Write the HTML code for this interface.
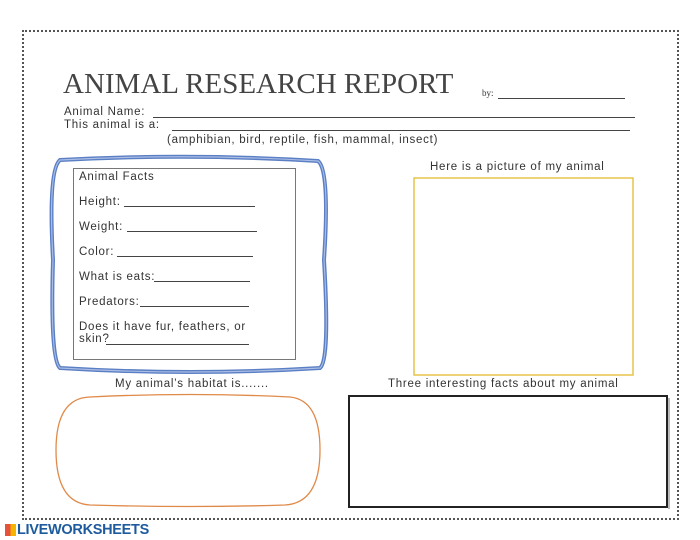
<!DOCTYPE html>
<html><head><style>
body{margin:0;width:700px;height:540px;background:#fff;position:relative;overflow:hidden;font-family:"Liberation Sans",sans-serif;color:#333}
.a{position:absolute;white-space:nowrap}
.t{font-size:11.5px;letter-spacing:0.75px}
.l{position:absolute;border-bottom:1px solid #444;height:0}
</style></head><body>
<div class="a" style="left:22px;top:30px;width:653px;height:486px;border:2px dotted #555"></div>
<div class="a" style="left:63px;top:68px;font-family:'Liberation Serif',serif;font-size:29px;letter-spacing:0px;color:#444;transform:scaleX(1.0);transform-origin:left">ANIMAL RESEARCH REPORT</div>
<div class="a" style="left:482px;top:88px;font-size:9px;font-family:'Liberation Serif',serif">by:</div>
<div class="l" style="left:498px;top:98px;width:127px"></div>
<div class="a t" style="left:64px;top:106px">Animal Name:</div>
<div class="l" style="left:153px;top:117px;width:482px"></div>
<div class="a t" style="left:64px;top:119px">This animal is a:</div>
<div class="l" style="left:172px;top:130px;width:458px"></div>
<div class="a t" style="left:167px;top:134px">(amphibian, bird, reptile, fish, mammal, insect)</div>
<svg class="a" style="left:0;top:0" width="700" height="540">
<path d="M60 160 Q190 153 318 161 Q330 170 324 260 Q330 360 320 368 Q190 376 60 368 Q50 360 53 260 Q48 170 60 160Z" fill="none" stroke="#5b7fc4" stroke-width="4"/>
<path d="M60 160 Q190 153 318 161 Q330 170 324 260 Q330 360 320 368 Q190 376 60 368 Q50 360 53 260 Q48 170 60 160Z" fill="none" stroke="#a9bde5" stroke-width="1.2"/>
<rect x="73.5" y="168.5" width="222" height="191" fill="#fff" stroke="#777"/>
<rect x="414" y="178" width="219" height="197" fill="none" stroke="#e8c34a" stroke-width="1.5"/>
<path d="M90 397 Q190 392 290 397 Q320 400 320 450 Q320 503 285 505 Q190 508 90 505 Q56 503 56 450 Q56 398 90 397Z" fill="none" stroke="#e08a4a" stroke-width="1.3"/>
<rect x="349" y="396" width="318" height="111" fill="none" stroke="#222" stroke-width="2"/>
<rect x="668" y="398" width="2" height="111" fill="#bbb"/>
</svg>
<div class="a t" style="left:79px;top:171px">Animal Facts</div>
<div class="a t" style="left:79px;top:196px">Height:</div><div class="l" style="left:124px;top:206px;width:131px"></div>
<div class="a t" style="left:79px;top:221px">Weight:</div><div class="l" style="left:127px;top:231px;width:130px"></div>
<div class="a t" style="left:79px;top:246px">Color:</div><div class="l" style="left:117px;top:256px;width:136px"></div>
<div class="a t" style="left:79px;top:271px">What is eats:</div><div class="l" style="left:154px;top:281px;width:96px"></div>
<div class="a t" style="left:79px;top:296px">Predators:</div><div class="l" style="left:140px;top:306px;width:109px"></div>
<div class="a t" style="left:79px;top:321px">Does it have fur, feathers, or</div>
<div class="a t" style="left:79px;top:333px">skin?</div><div class="l" style="left:106px;top:344px;width:143px"></div>
<div class="a t" style="left:430px;top:161px">Here is a picture of my animal</div>
<div class="a t" style="left:115px;top:378px">My animal’s habitat is.......</div>
<div class="a t" style="left:388px;top:378px">Three interesting facts about my animal</div>
<div class="a" style="left:5px;top:524px;width:11px;height:12px;background:linear-gradient(90deg,#e5533d 50%,#f5b400 50%)"></div>
<div class="a" style="left:17px;top:522px;font-weight:bold;font-size:14.5px;color:#1d5a9e;letter-spacing:-0.3px">LIVEWORKSHEETS</div>
</body></html>
